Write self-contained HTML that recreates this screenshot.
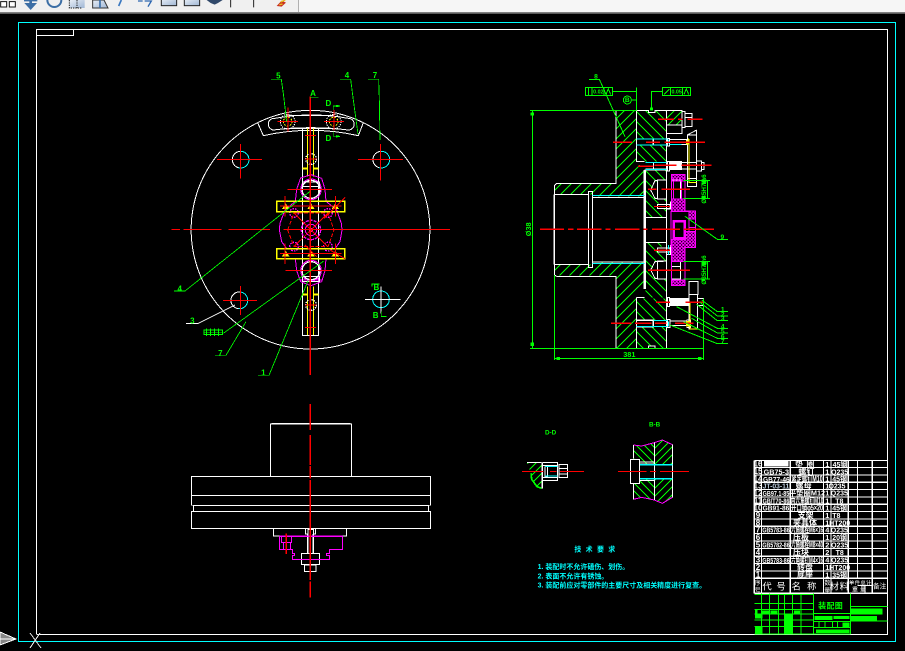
<!DOCTYPE html>
<html><head><meta charset="utf-8"><style>
html,body{margin:0;padding:0;background:#000;width:905px;height:651px;overflow:hidden}
svg{display:block;position:absolute;left:0;top:0;shape-rendering:crispEdges}
text{font-family:"Liberation Sans","Noto Sans CJK SC",sans-serif}
</style></head><body>
<svg width="905" height="651" viewBox="0 0 905 651" xmlns="http://www.w3.org/2000/svg">
<defs>
<pattern id="h1" width="30" height="30" patternUnits="userSpaceOnUse"><path d="M-5 35L35 -5M-5 5L5 -5M25 35L35 25" stroke="#0f0" stroke-width="2.6"/></pattern>
<pattern id="h2" width="30" height="30" patternUnits="userSpaceOnUse"><path d="M-5 -5L35 35M-5 25L5 35M25 -5L35 5" stroke="#0f0" stroke-width="2.6"/></pattern>
<pattern id="hm" width="10" height="10" patternUnits="userSpaceOnUse"><path d="M-2 12L12 -2M-2 -2L12 12" stroke="#f0f" stroke-width="2.8"/></pattern>
<pattern id="h1s" width="24" height="24" patternUnits="userSpaceOnUse"><path d="M-4 28L28 -4M-4 4L4 -4M20 28L28 20" stroke="#0f0" stroke-width="3"/></pattern>
<pattern id="h2s" width="24" height="24" patternUnits="userSpaceOnUse"><path d="M-4 -4L28 28M-4 20L4 28M20 -4L28 4" stroke="#0f0" stroke-width="3"/></pattern>
<linearGradient id="bt" x1="0" y1="0" x2="1" y2="1"><stop offset="0" stop-color="#e8eef6"/><stop offset="1" stop-color="#9fb6d4"/></linearGradient>
</defs>

<!-- toolbar -->
<rect width="905" height="14" fill="#a0a0a0"/>
<rect width="905" height="12" fill="#f0f0f0"/>
<rect x="299" width="606" height="12" fill="#f6f6f6"/>
<rect x="298" width="1" height="12" fill="#b0b0b0"/>
<rect y="12" width="905" height="1" fill="#808080"/>
<rect y="13" width="905" height="1" fill="#5a5a5a"/>
<g transform="scale(.3333)" style="shape-rendering:auto">
<path d="M2 5H20V21H2ZM28 5H46V21H28Z" fill="#fff" stroke="#111" stroke-width="3"/>
<path d="M92 0V24M72 0H112M92 24L82 13H102Z" stroke="#3c6ea5" stroke-width="8" fill="#3c6ea5"/>
<path d="M142 0A21 21 0 0 0 184 0" fill="none" stroke="#3c6ea5" stroke-width="6"/>
<rect x="208" y="0" width="46" height="24" fill="url(#bt)"/><path d="M208 0V24H246" fill="none" stroke="#222" stroke-width="3" stroke-dasharray="4 3"/><path d="M231 0V24" stroke="#222" stroke-width="3" stroke-dasharray="4 3"/>
<path d="M278 0H312L324 24H278Z" fill="url(#bt)" stroke="#333" stroke-width="3"/><path d="M300 0V24" stroke="#3c6ea5" stroke-width="5"/>
<path d="M364 0L356 18" stroke="#3a78c0" stroke-width="5"/>
<path d="M414 3H428M434 3H454L444 20" stroke="#2c66b0" stroke-width="4" fill="none"/>
<rect x="484" y="-3" width="46" height="20" fill="url(#bt)" stroke="#222" stroke-width="3"/>
<rect x="553" y="-3" width="46" height="20" fill="url(#bt)" stroke="#222" stroke-width="3"/>
<path d="M620 0H668L654 9L644 14L632 9Z" fill="#30486a"/>
<path d="M692 0V22M761 0V22" stroke="#222" stroke-width="3"/>
<path d="M830 18L845 2L858 8L845 20Z" fill="#c83020"/><path d="M842 6L856 0M838 14L848 12" stroke="#e8c020" stroke-width="4"/>
</g>

<!-- frames -->
<rect x="18.500" y="22.500" width="877" height="619" fill="none" stroke="#0ff"/>
<path d="M36.500 634V29.500H887.500V634.500H36.500" fill="none" stroke="#fff"/>
<path d="M36.500 35.500H73.500V29.500" fill="none" stroke="#fff"/>
<!-- UCS -->
<path d="M0 632L16 639L0 645Z" fill="#888" stroke="#fff"/><path d="M0 639H16" stroke="#fff"/>
<path d="M30 633L41 648M40 633L30 648M35 640L36 641" stroke="#e0e0e0"/>

<!-- FRONT VIEW -->
<g transform="translate(170,60) scale(.33333)" fill="none" stroke-width="3">
<path d="M263 188A358 358 0 1 0 580 188M263 188A358 358 0 0 1 580 188" stroke="#fff"/>
<path d="M263 188L280 227Q423 195 565 227L580 188" stroke="#fff"/>
<path d="M315 175Q423 155 535 175A17 17 0 0 1 535 210Q423 196 310 210A17 17 0 0 1 315 175Z" stroke="#fff"/>
<path d="M350 166H490M350 205H490" stroke="#fff"/>
<circle cx="353" cy="185" r="22" stroke="#fff" stroke-dasharray="4 3"/><circle cx="491" cy="185" r="22" stroke="#fff" stroke-dasharray="4 3"/>
<circle cx="353" cy="185" r="13" stroke="#ff0" stroke-dasharray="5 4"/><circle cx="491" cy="185" r="13" stroke="#ff0" stroke-dasharray="5 4"/>
<path d="M397 205V827H446V205M397 827H446" stroke="#fff"/>
<path d="M412 205V350M431 205V350M412 680V825M431 680V825" stroke="#ff0"/>
<path d="M398 326H412M431 326H446M398 704H412M431 704H446" stroke="#ff0" stroke-width="6"/>
<circle cx="423" cy="297" r="16" stroke="#fff" stroke-width="4" stroke-dasharray="4 3"/>
<circle cx="423" cy="735" r="16" stroke="#fff" stroke-width="4" stroke-dasharray="4 3"/>
<!-- holes -->
<g stroke="#0ff"><path d="M211 274A25 25 0 1 1 205 323"/><path d="M633 274A25 25 0 1 1 627 323"/><path d="M211 696A25 25 0 1 1 205 746"/><circle cx="633" cy="718" r="25"/></g>
<g stroke="#fff"><path d="M205 323A25 25 0 0 1 211 274"/><path d="M627 323A25 25 0 0 1 633 274"/><path d="M205 746A25 25 0 0 1 211 696"/></g>
<path d="M585 719H692M633 680V760" stroke="#fff"/>
<!-- magenta -->
<g stroke="#f0f">
<path d="M423 344L455 355L465 388L468 424M423 344L392 354L380 388L376 424"/>
<path d="M423 677L455 665L465 632L468 596M423 677L392 665L380 632L376 596"/>
<path d="M376 424L345 450L330 490L328 510L335 545L350 566M468 424L500 450L514 490L516 510L510 545L495 566"/>
<circle cx="423" cy="510" r="29" stroke-dasharray="9 3" stroke-width="4"/><circle cx="423" cy="510" r="17"/>
<circle cx="423" cy="510" r="5" fill="#f0f"/>
<circle cx="372" cy="459" r="13" stroke-width="4" stroke-dasharray="5 3"/><circle cx="474" cy="459" r="13" stroke-width="4" stroke-dasharray="5 3"/>
<circle cx="372" cy="560" r="13" stroke-width="4" stroke-dasharray="5 3"/><circle cx="474" cy="560" r="13" stroke-width="4" stroke-dasharray="5 3"/>
<circle cx="423" cy="388" r="31"/><circle cx="423" cy="632" r="31"/>
<path d="M390 660H455" stroke-width="3"/>
</g>
<circle cx="423" cy="388" r="27" stroke="#fff" stroke-width="4"/><circle cx="423" cy="632" r="27" stroke="#fff" stroke-width="4"/>
<path d="M398 366H448V380H398ZM398 650H448V664H398Z" stroke="#fff"/>
<!-- yellow -->
<path d="M320 424H524V455H320ZM320 566H524V596H320Z" stroke="#ff0" stroke-width="4"/>
<g fill="#ff0"><path d="M347 430L358 447H336ZM423 430L434 447H412ZM496 430L507 447H485ZM347 572L358 589H336ZM423 572L434 589H412ZM496 572L507 589H485Z"/></g>
<!-- red -->
<g stroke="#f00">
<path d="M5 508H30M40 508H155M175 508H300M340 508H840"/>
<path d="M421 110V945" stroke-width="3.500"/>
<path d="M354 142V214M322 184H384M492 150V212M462 184H522"/>
<path d="M141 298H276M211 252V356M564 298H699M632 252V362M159 721H261M211 678V765"/>
<path d="M352 388H486M346 631H486"/>
<path d="M345 408V470M497 408V470M345 550V612M497 550V612"/>
<path d="M330 438H515M330 580H515"/>
<path d="M372 459L473 560M474 459L372 560M405 555L440 590M525 412L463 475M480 570L525 596"/>
<path d="M353 510L372 459L474 459L492 510L474 560L372 560Z" stroke-dasharray="12 5"/>
<path d="M405 226H438M405 803H438M405 735H440M405 297H440"/>
</g>
<!-- green -->
<g stroke="#0f0" stroke-width="2.500">
<path d="M303 58H334L340 100L350 185"/>
<path d="M510 58H542L550 120L564 222"/>
<path d="M594 58H626L628 120L630 240"/>
<path d="M420 112H446"/><path d="M490 150V138H510M490 215V229H510"/>
<path d="M12 693H45L420 394"/>
<path d="M160 820L460 604"/>
<path d="M135 886H168L228 785"/>
<path d="M264 946H297L415 660"/>
<path d="M606 680V672H628M634 755V770H650"/>
<path d="M102 810H158V824H102ZM102 817H158M110 806V828M122 806V828M134 806V828M146 806V828"/>
<path d="M500 140L510 138L500 136ZM500 231L510 229L500 227Z" fill="#0f0"/>
</g>
<path d="M48 790H85L195 735" stroke="#fff"/>
<g fill="#0f0" font-size="24" font-weight="bold" text-anchor="middle" stroke="none">
<text x="325" y="56">5</text><text x="531" y="54">4</text><text x="615" y="54">7</text>
<text x="429" y="108">A</text><text x="475" y="138">D</text><text x="475" y="243">D</text>
<text x="29" y="694">4</text><text x="67" y="790">3</text><text x="151" y="888">7</text><text x="280" y="946">1</text>
<text x="619" y="690">B</text><text x="617" y="774">B</text>
</g>
</g>

<!-- TOP VIEW -->
<g transform="translate(180,400) scale(.33333)" fill="none" stroke-width="3">
<g stroke="#fff">
<path d="M272 229V72H514V229M274 71H512" />
<path d="M34 229H751V385H34ZM34 286H751M34 316H751M34 334H751"/>
<path d="M280 385V408H500V385"/>
<path d="M376 385V402H384V388H400V402H407V385"/>
<path d="M383 402V460M400 402V460" stroke-width="5"/>
<path d="M364 460H419V494H364ZM374 494V515H408V494M382 515H402"/>
<path d="M374 494H408" stroke-width="5"/>
</g>
<rect x="33" y="317" width="7" height="16" fill="#000"/><rect x="746" y="317" width="7" height="16" fill="#000"/>
<path d="M40 316V334M745 316V334" stroke="#fff"/>
<g stroke="#f0f">
<path d="M298 409H488V449H449V460H439V467H449V478H338V467H344V460H338V449H298Z"/>
<path d="M298 409H488" stroke-width="4"/>
<path d="M304 409V427H334V409M310 427V449M331 427V449M304 427H334"/>
</g>
<path d="M391 12V90M391 105V195M391 198V236M391 240V540M391 544V592M319 400V462" stroke="#f00" stroke-width="3.500"/>
</g>

<!-- SECTION VIEW -->
<g transform="translate(520,65) scale(.33333)" fill="none" stroke-width="3">
<!-- hatched -->
<path d="M288 137H350V290L374 315V395H220V388H103V362L110 355H288Z" fill="url(#h1)"/>
<path d="M288 850H350V697L374 672V591H220V598H103V624L110 631H288Z" fill="url(#h1)"/>
<path d="M350 137H385V143H405V137H440V222H350Z" fill="url(#h2)"/>
<path d="M350 240H440V290H350Z" fill="url(#h2)"/>
<path d="M376 315H440V345L412 345L395 375L412 402H440V415H412V430H440V457H376Z" fill="url(#h2)"/>
<path d="M376 532H440V545H412V560H440V588H412L395 615L412 642H440V697H376Z" fill="url(#h2)"/>
<path d="M350 700H440V765H350ZM350 785H385V850H350ZM385 785H440V850H405V843H385Z" fill="url(#h2)"/>
<path d="M440 137H486V180H440Z" fill="url(#h1s)"/>
<g stroke="#fff" stroke-width="3">
<path d="M288 137V355H110L103 362V630L110 634H288V850M103 388H205M218 388V395"/>
<path d="M103 388V598" stroke-width="5"/>
<path d="M105 598H205M218 598V591"/>
<path d="M205 379H218V607H205Z"/>
<path d="M218 397H374V591H218" stroke-width="3"/>
<path d="M374 315V672" stroke-width="7"/>
<path d="M350 137V290H374M350 697H374M350 697V850" />
<path d="M350 137H385V143H405V137H440V850H405V843H385V850H288"/>
<path d="M288 137H350"/>
<path d="M374 315H440M376 457H440M376 532H440M376 672"/>
<path d="M350 222H400V240H350M400 222V240M350 766H400V785H350M400 766V785" stroke-width="4"/>
<path d="M442 220V243H448V220ZM448 224H500V238H448M484 224H505V238"/>
<path d="M376 292H400V312H376M400 292V312H440M400 292H440"/>
<path d="M442 290V318H448V290Z"/>
<path d="M448 290H485V314H448Z" fill="#fff"/>
<path d="M485 293H530V312H485M530 288H545V318H530M545 293H552V313H545"/>
<path d="M440 137H486V205H440M440 180H486M486 140H495V188H486M495 146H516V184H495M495 158H516V172"/>
<path d="M502 210V340H530V210H502M502 210L530 195M530 195V365H502V340"/>
<path d="M412 345H440V402H412ZM405 347H412V400H405L392 375Z" stroke-width="3"/>
<path d="M412 588H440V642H412ZM405 590H412V640H405L392 615Z" stroke-width="3"/>
<path d="M412 418H450V430H412ZM412 549H450V561H412Z"/>
<path d="M440 410V432H452V410M440 540V568H452V540"/>
<path d="M453 345H482V402H453M453 588H482V642H453M453 605H482"/>
<path d="M442 697V725H448V697Z"/>
<path d="M448 700H505V722H448Z" fill="#fff"/>
<path d="M505 688H534V650H507V792H533V688M534 700H550V722H534"/>
<path d="M400 766H442V785H400M442 763V788H450V763ZM450 768H500V782H450M500 765H512V788H500"/>
<path d="M412 590H430"/>
</g>
<g stroke="#0ff" stroke-width="3">
<path d="M350 222H442M350 240H442M448 238H484"/>
<path d="M376 292H440M376 314H440"/>
<path d="M218 392H374M218 596H374"/>
<path d="M400 767H442M350 784H442"/>
<path d="M446 224V236M446 556V568M446 540V552M446 770V785"/>
</g>
<!-- magenta -->
<path d="M455 328H495V438H527V548H495V662H455V545H453V440H455Z" stroke="#f0f" stroke-width="3"/>
<path d="M455 328H495V348H455ZM455 402H495V438H527V462H507V440H455ZM495 500H527V548H495V590H455V524H495ZM455 645H495V662H455Z" fill="url(#hm)" stroke="#f0f"/>
<path d="M459 467H496V522H459ZM463 471H492V518H463ZM507 462V526" stroke="#f0f" stroke-width="4"/>
<path d="M460 348V402M485 348V402" stroke="#f0f"/>
<path d="M509 488H527" stroke="#f0f"/>
<!-- yellow -->
<path d="M507 222V352H530M510 712V792H533M505 232V220" stroke="#ff0" stroke-width="3"/>
<path d="M498 768H512V785H498ZM498 226H508V238H498Z" fill="#ff0"/>
<!-- red -->
<g stroke="#f00" stroke-width="3.500">
<path d="M60 493H132M144 493H160M171 493H244M256 493H272M285 493H358M370 493H382M396 493H480M492 493H582"/>
<path d="M279 232H336M378 232H420M434 232H555"/>
<path d="M414 163H462M474 163H488M502 163H548"/>
<path d="M354 304H400M404 301H470M484 301H574"/>
<path d="M384 373H410M424 373H510"/>
<path d="M402 425H450M402 556H450"/>
<path d="M384 616H510"/>
<path d="M408 712H450M496 712H552"/>
<path d="M273 775H335M345 775H395M405 775H440M465 775H520"/>
</g>
<!-- green -->
<g stroke="#0f0" stroke-width="3">
<path d="M30 137H350M30 850H550M37 137V850"/>
<path d="M103 630V885M550 700V885M103 880H550"/>
<path d="M32 142H42V152H32ZM32 833H42V843H32ZM110 876H120V885H110ZM534 876H544V885H534Z" fill="#0f0" stroke="none"/>
<path d="M196 67H278V92H196ZM205 67V92M216 67V92M252 67V92"/>
<path d="M278 79H350M350 67V137M427 67H512V92H427ZM452 67V92M487 67V92M427 79H394V135"/>
<path d="M258 88L265 72L272 88M492 88L499 72L506 88M432 88L448 72"/>
<circle cx="322" cy="105" r="12"/><path d="M335 105H350"/>
<path d="M207 43H238L315 215"/>
<path d="M390 127H399V136H390Z" fill="#0f0" stroke="none"/>
<path d="M490 347H570M490 400H570M490 589H570M490 642H570"/>
<path d="M562 347V400M562 589V642M545 355H558M545 600H558"/>
<rect x="545" y="344" width="14" height="8" fill="#0f0" stroke="none"/><rect x="545" y="393" width="10" height="8" fill="#0f0" stroke="none"/>
<rect x="545" y="590" width="14" height="8" fill="#0f0" stroke="none"/><rect x="545" y="640" width="10" height="8" fill="#0f0" stroke="none"/>
<path d="M495 454L592 523H624"/>
<path d="M545 705L592 740H624M540 712L592 753H624M530 718L592 767H624M470 725L592 790H624M515 760L592 804H624M490 770L592 820H624M450 780L592 836H624"/>
</g>
<g fill="#0f0" stroke="none" font-size="20" text-anchor="middle" font-weight="bold">
<text x="228" y="40">8</text>
<text x="322" y="111">B</text>
<text x="235" y="86" font-size="16">0.02</text><text x="470" y="86" font-size="16">0.05</text>
<text x="328" y="876" font-size="22">381</text>
<text x="607" y="522">9</text>
<text x="608" y="740">1</text><text x="608" y="754">2</text><text x="608" y="767">3</text><text x="608" y="790">4</text><text x="608" y="805">5</text><text x="608" y="820">6</text><text x="608" y="836">7</text>
<text transform="translate(33,493) rotate(-90)" font-size="22">Ø38</text>
<text transform="translate(558,372) rotate(-90)" font-size="19">Ø35H7/h6</text>
<text transform="translate(558,615) rotate(-90)" font-size="19">Ø35H7/h6</text>
</g>
</g>

<!-- SECTION DETAILS -->
<g transform="translate(515,420) scale(.33333)" fill="none" stroke-width="3">
<path d="M36 128H80V205L66 200L50 178L46 156Z" fill="url(#h1s)"/>
<path d="M36 128H80" stroke="#fff"/><path d="M48 160L50 178L66 200L80 205" stroke="#0f0" stroke-width="5"/>
<path d="M82 128V205" stroke="#fff" stroke-width="4"/>
<g stroke="#fff"><path d="M82 127H128V182H82M82 136H128M82 172H128M128 127V182M90 140V170H97V140"/><path d="M132 133H158V173H132ZM132 145H158V162H132"/></g>
<path d="M90 140H128M90 168H128" stroke="#0ff" stroke-width="3"/>
<path d="M21 154H85M105 154H125M135 154H207" stroke="#f00" stroke-width="3"/>
<path d="M356 75L380 78L418 68V240L380 232L356 238Z" fill="url(#h2s)"/>
<path d="M420 68L442 60L472 74V232L442 250L420 240Z" fill="url(#h1s)"/>
<path d="M375 132H472V176H375Z" fill="#000"/>
<path d="M355 75L380 78L418 68L442 60L472 74M355 238L380 232L418 240L442 250L472 232" stroke="#f0f" stroke-width="3"/>
<g stroke="#fff"><path d="M356 75V116M356 192V238M472 74V232M418 68V240" stroke-width="3"/><path d="M346 118H374V191H346Z" stroke-width="3" fill="#000"/><path d="M374 126H418V132H374M374 176H418V182H374"/></g>
<path d="M375 134H472M375 176H472" stroke="#0ff" stroke-width="4"/>
<path d="M309 154H395M405 154H423M435 154H522" stroke="#f00" stroke-width="3"/>
<g fill="#0f0" stroke="none" font-size="19" font-weight="bold"><text x="90" y="44">D-D</text><text x="402" y="20">B-B</text></g>
<g fill="#0ff" stroke="none" font-size="21" font-weight="bold">
<text x="178" y="394" letter-spacing="13">技术要求</text>
<text x="68" y="447">1. 装配时不允许磕伤、划伤。</text>
<text x="68" y="475">2. 表面不允许有锈蚀。</text>
<text x="68" y="502">3. 装配前应对零部件的主要尺寸及相关精度进行复查。</text>
</g>
</g>

<!-- TITLE BLOCK -->
<g transform="translate(745,455) scale(.33333)" fill="none" stroke-width="3">
<g stroke="#fff" stroke-width="3.500">
<path d="M28 17H427M28 38H427M28 60H427M28 82H427M28 104H427M28 126H427M28 148H427M28 170H427M28 192H427M28 214H427M28 236H427M28 258H427M28 281H427M28 304H427M28 326H427M28 348H427M28 370H427M28 415H427"/>
<path d="M28 17V415M50 17V415M136 17V415M236 17V415M258 17V415M310 17V415M338 17V370M382 17V415M338 392H382M360 392V415M310 370V415"/>
</g>
<rect x="57" y="18" width="73" height="16" fill="#fff"/>
<g fill="#fff" stroke="none" font-size="24" font-weight="bold" text-anchor="middle">
<text x="39" y="35">16</text><text x="39" y="57">15</text><text x="39" y="79">14</text><text x="39" y="101">13</text><text x="39" y="123">12</text><text x="39" y="145">11</text><text x="39" y="167">10</text><text x="39" y="189">9</text><text x="39" y="211">8</text><text x="39" y="233">7</text><text x="39" y="255">6</text><text x="39" y="278">5</text><text x="39" y="300">4</text><text x="39" y="323">3</text><text x="39" y="345">2</text><text x="39" y="367">1</text>
<g font-size="22">
<text x="94" y="59" textLength="76" lengthAdjust="spacingAndGlyphs">GB75-3</text><text x="94" y="81" textLength="80" lengthAdjust="spacingAndGlyphs">GB77-46</text><text x="93" y="101" textLength="80" lengthAdjust="spacingAndGlyphs" fill="#bcd">JT-03-11</text><text x="93" y="123" textLength="80" lengthAdjust="spacingAndGlyphs">GB97.1-85</text><text x="93" y="145" textLength="80" lengthAdjust="spacingAndGlyphs">GB/T70-86</text><text x="93" y="167" textLength="80" lengthAdjust="spacingAndGlyphs">GB91-86</text><text x="93" y="233" textLength="82" lengthAdjust="spacingAndGlyphs">GB5783-86</text><text x="93" y="277" textLength="82" lengthAdjust="spacingAndGlyphs">GB5782-86</text><text x="93" y="324" textLength="82" lengthAdjust="spacingAndGlyphs">GB5783-86</text>
</g>
<g font-size="24">
<text x="184" y="36" letter-spacing="10">垫圈</text><text x="184" y="58">螺钉</text><text x="186" y="79" textLength="94" lengthAdjust="spacingAndGlyphs">紧定螺钉M10</text><text x="176" y="101">螺母</text><text x="186" y="122" font-size="22">平垫圈M12</text><text x="186" y="145" textLength="98" lengthAdjust="spacingAndGlyphs">内六角螺钉M10</text><text x="186" y="167" textLength="96" lengthAdjust="spacingAndGlyphs">开口销φ5×20</text><text x="182" y="189">支架</text><text x="180" y="211">夹具体</text><text x="186" y="233" textLength="96" lengthAdjust="spacingAndGlyphs">六角螺栓M6×16</text><text x="168" y="255">压板</text><text x="186" y="277" textLength="96" lengthAdjust="spacingAndGlyphs">六角螺栓M8×40</text><text x="168" y="300">压块</text><text x="186" y="324" textLength="96" lengthAdjust="spacingAndGlyphs">六角螺钉M4×16</text><text x="180" y="345">转盘</text><text x="180" y="367">底座</text>
</g>
<g font-size="22"><text x="247" y="36">1</text><text x="247" y="58">1</text><text x="247" y="79">1</text><text x="247" y="101">1</text><text x="247" y="122">1</text><text x="247" y="145">1</text><text x="247" y="167">1</text><text x="247" y="189">1</text><text x="247" y="211">1</text><text x="247" y="233">4</text><text x="247" y="255">1</text><text x="247" y="277">2</text><text x="247" y="300">2</text><text x="247" y="323">4</text><text x="247" y="345">1</text><text x="247" y="367">1</text></g>
<g font-size="21"><text x="285" y="36">45钢</text><text x="284" y="59">Q235</text><text x="284" y="79">45钢</text><text x="276" y="101">Q235</text><text x="283" y="122">Q235</text><text x="283" y="145">T8</text><text x="284" y="167">45钢</text><text x="274" y="189">T8</text><text x="284" y="211">HT200</text><text x="283" y="233">Q235</text><text x="284" y="255">20钢</text><text x="284" y="277">Q235</text><text x="284" y="300">T8</text><text x="284" y="323">Q235</text><text x="284" y="345">HT200</text><text x="284" y="367">35钢</text></g>
<g font-size="28" font-weight="normal"><text x="94" y="404" letter-spacing="14">代号</text><text x="186" y="404" letter-spacing="18">名称</text><text x="284" y="404" letter-spacing="2">材料</text><text x="404" y="400" font-size="20" letter-spacing="0">备注</text><text x="38" y="390" font-size="18">序</text><text x="38" y="412" font-size="18">号</text><text x="247" y="390" font-size="18">数</text><text x="247" y="412" font-size="18">量</text><text x="346" y="388" font-size="16" letter-spacing="1">单件总计</text><text x="345" y="410" font-size="18" letter-spacing="6">重量</text></g>
</g>
<g stroke="#0f0" stroke-width="3">
<path d="M28 418H205M28 445H205M28 463H205M28 477H205M28 495H205M28 515H205M28 537H205"/>
<path d="M50 415V537M73 415V537M100 418V537M118 418V537M143 418V537M168 418V537M205 415V537"/>
<path d="M316 415V537M205 475H316M205 500H316M205 518H316M205 537H316M316 455H427M316 498H427M222 500V518M240 500V518M262 500V518M278 500V518"/>
</g>
<g fill="#0f0">
<rect x="30" y="463" width="8" height="12"/><rect x="50" y="466" width="22" height="10"/><rect x="77" y="466" width="20" height="10"/><rect x="147" y="466" width="18" height="10"/>
<rect x="30" y="479" width="22" height="11"/><rect x="118" y="479" width="25" height="58"/><rect x="30" y="513" width="22" height="24"/>
<rect x="316" y="461" width="96" height="17"/><rect x="316" y="483" width="80" height="17"/>
<rect x="209" y="483" width="53" height="12"/><rect x="266" y="483" width="47" height="9"/><rect x="293" y="503" width="20" height="14"/><rect x="213" y="524" width="100" height="10"/>
<text x="257" y="461" font-size="24" font-weight="bold" text-anchor="middle" letter-spacing="1">装配图</text>
</g>
</g>
</svg>
</body></html>
